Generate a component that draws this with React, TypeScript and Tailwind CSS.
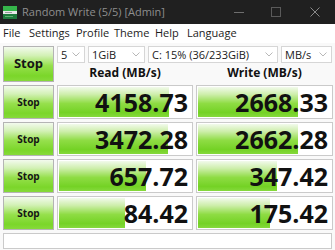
import React from "react";

type Row = { read: string; write: string; rw: number; ww: number };

const rows: Row[] = [
  { read: "4158.73", write: "2668.33", rw: 110, ww: 100 },
  { read: "3472.28", write: "2662.28", rw: 109, ww: 100 },
  { read: "657.72", write: "347.42", rw: 87, ww: 79 },
  { read: "84.42", write: "175.42", rw: 66, ww: 72 },
];

const menu = [
  { label: "File", w: "w-[26px]" },
  { label: "Settings", w: "w-[47px]" },
  { label: "Profile", w: "w-[38px]" },
  { label: "Theme", w: "w-[41px]" },
  { label: "Help", w: "w-[32px]" },
  { label: "Language", w: "w-[60px]" },
];

const greenBtn =
  "border border-[#b4b4b4] bg-[linear-gradient(to_bottom,#f3faee_0%,#d3f1b6_25%,#96e04c_55%,#7bd62a_85%,#86da3a_100%)] font-bold text-[#151515]";

const barBg =
  "bg-[linear-gradient(to_bottom,#f2faec_0%,#cdeeaa_25%,#8edc43_55%,#74d225_85%,#85d93c_100%)]";

function Chevron() {
  return (
    <svg width="8" height="5" viewBox="0 0 8 5" className="shrink-0">
      <polyline points="0.5,0.5 4,4 7.5,0.5" fill="none" stroke="#b8b8b8" strokeWidth="1" />
    </svg>
  );
}

function Select({ label, w }: { label: string; w: string }) {
  return (
    <div className={`${w} flex h-[17px] items-center justify-between border border-[#d6d6d6] bg-white pl-[3px] pr-[4px] text-[11px] text-[#1a1a1a]`}>
      <span className="leading-none">{label}</span>
      <Chevron />
    </div>
  );
}

function AppIcon() {
  return (
    <svg width="14" height="13" viewBox="0 0 14 13" className="ml-[3px]">
      <rect x="0" y="0" width="14" height="5" fill="#35b54a" />
      <rect x="0" y="5" width="14" height="3" fill="#e8e8e8" />
      <rect x="2" y="6" width="7" height="1" fill="#9a9a9a" />
      <rect x="0" y="8" width="14" height="5" fill="#1f7a3c" />
      <rect x="2" y="10" width="8" height="1" fill="#5fae6e" />
    </svg>
  );
}

function Cell({ value, width }: { value: string; width: number }) {
  return (
    <div className="relative h-[34px] border border-[#cacaca] bg-white">
      <div className={`absolute left-[1px] top-[1px] bottom-[1px] ${barBg}`} style={{ width }} />
      <div className="relative flex h-full items-center justify-end pr-[4px] text-[25px] font-bold leading-none text-[#111]">
        {value}
      </div>
    </div>
  );
}

export default function App() {
  return (
    <div className="h-[250px] w-[335px] overflow-hidden bg-[#f9f9f9] font-['Open_Sans','Noto_Sans',sans-serif]">
      <div className="flex h-[24px] items-center bg-[#202020]">
        <AppIcon />
        <span className="ml-[5px] text-[11px] text-[#8e8e8e]">Random Write (5/5) [Admin]</span>
        <div className="ml-auto flex h-full items-center">
          <div className="flex w-[36px] justify-center">
            <svg width="10" height="10" viewBox="0 0 10 10">
              <line x1="0" y1="5.5" x2="10" y2="5.5" stroke="#6e6e6e" strokeWidth="1" />
            </svg>
          </div>
          <div className="flex w-[38px] justify-center">
            <svg width="10" height="10" viewBox="0 0 10 10">
              <rect x="0.5" y="0.5" width="9" height="9" fill="none" stroke="#5a5a5a" strokeWidth="1" />
            </svg>
          </div>
          <div className="flex w-[40px] justify-center">
            <svg width="10" height="10" viewBox="0 0 10 10">
              <path d="M0.5 0.5 L9.5 9.5 M9.5 0.5 L0.5 9.5" stroke="#8a8a8a" strokeWidth="1" />
            </svg>
          </div>
        </div>
      </div>

      <div className="flex h-[19px] items-center bg-white px-[3px] text-[11px] text-[#1c1c1c]">
        {menu.map((m) => (
          <span key={m.label} className={m.w}>
            {m.label}
          </span>
        ))}
      </div>

      <div className="flex flex-col gap-[3px] px-[3px] pt-[3px]">
        <div className="flex gap-[3px]">
          <div className={`flex h-[36px] w-[51px] items-center justify-center text-[13px] ${greenBtn}`}>Stop</div>
          <div className="flex w-[275px] flex-col">
            <div className="flex gap-[3px]">
              <Select label="5" w="w-[28px]" />
              <Select label="1GiB" w="w-[57px]" />
              <Select label="C: 15% (36/233GiB)" w="w-[130px]" />
              <Select label="MB/s" w="w-[51px]" />
            </div>
            <div className="grid flex-1 grid-cols-[136px_137px] items-center gap-x-[3px] text-[12px] font-bold text-[#111]">
              <div className="text-center">Read (MB/s)</div>
              <div className="text-center">Write (MB/s)</div>
            </div>
          </div>
        </div>

        {rows.map((r) => (
          <div key={r.read} className="grid grid-cols-[51px_136px_137px] gap-x-[3px]">
            <div className={`flex h-[34px] items-center justify-center text-[10px] ${greenBtn}`}>Stop</div>
            <Cell value={r.read} width={r.rw} />
            <Cell value={r.write} width={r.ww} />
          </div>
        ))}

        <div className="h-[16px] border border-[#cacaca] bg-white" />
      </div>
    </div>
  );
}
